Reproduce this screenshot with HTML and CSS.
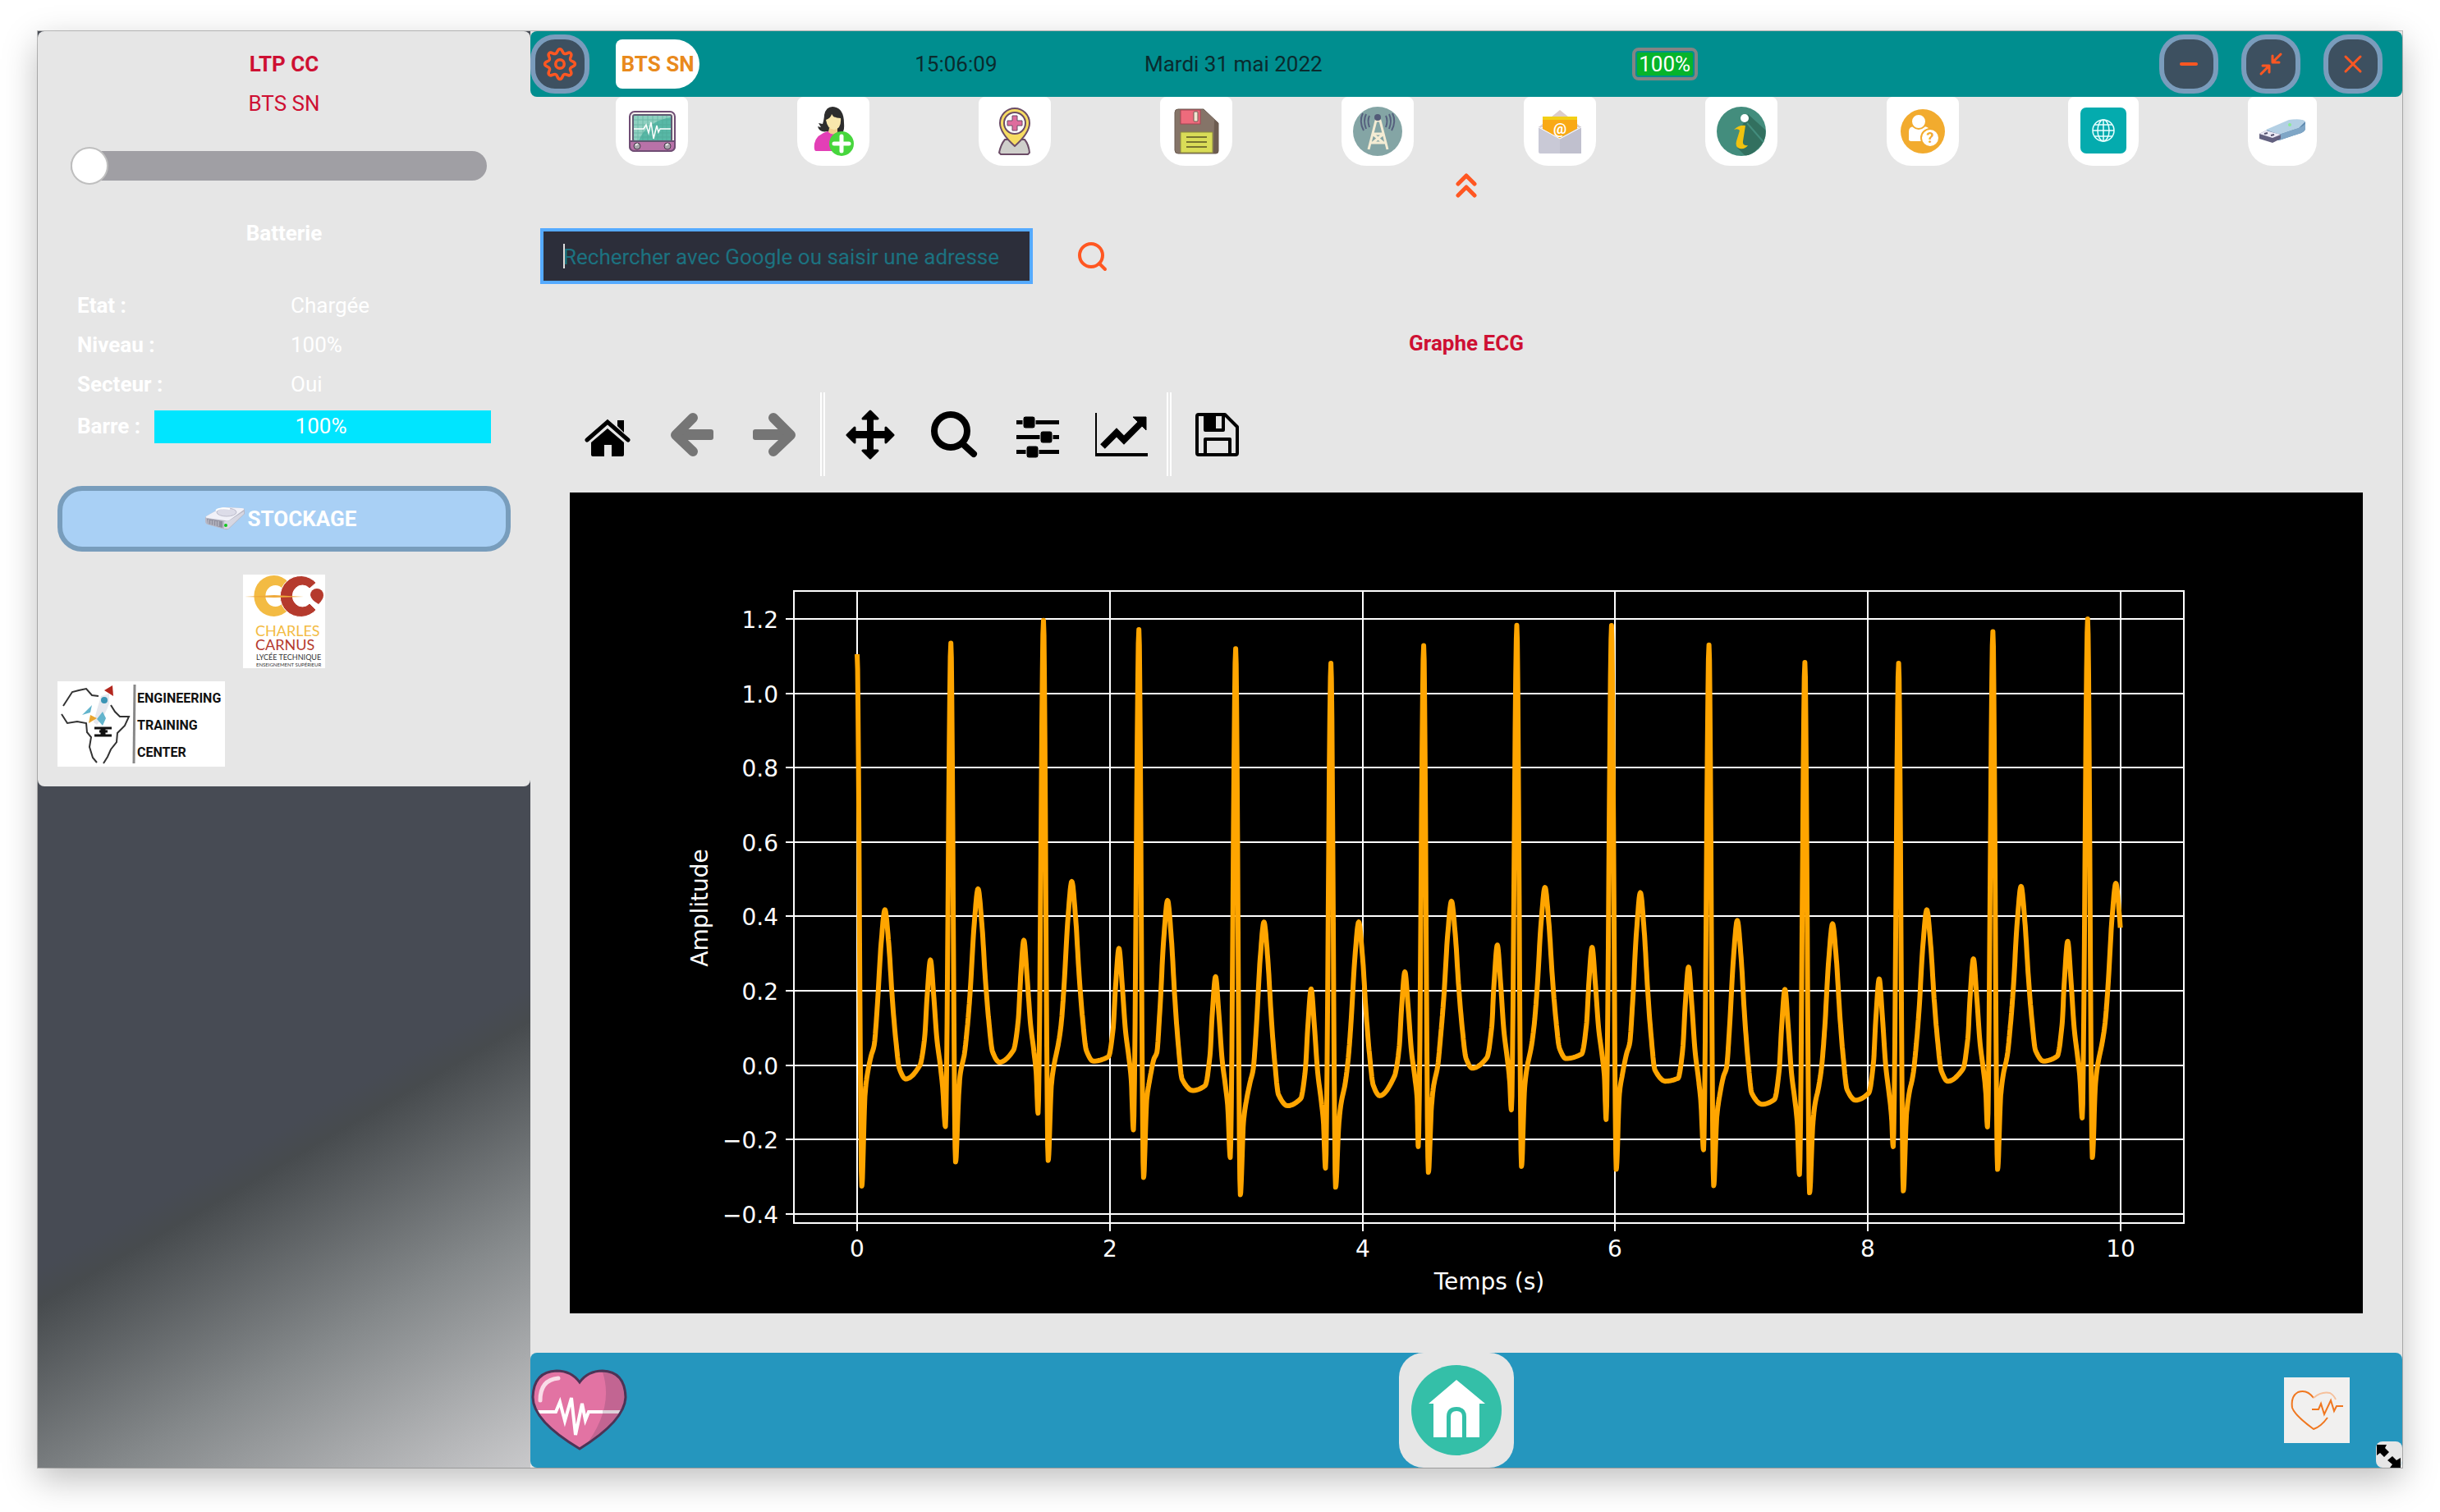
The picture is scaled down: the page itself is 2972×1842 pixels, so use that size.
FILE: index.html
```html
<!DOCTYPE html>
<html lang="fr">
<head>
<meta charset="utf-8">
<meta name="viewport" content="width=device-width, initial-scale=1">
<title>LTP CC - Graphe ECG</title>
<link rel="stylesheet" href="styles.css">
</head>
<body>
<div class="window">
  <div class="side">
    <aside class="panel">
      <h1 class="panel__title">LTP CC</h1>
      <p class="panel__subtitle">BTS SN</p>
      <input class="slider" type="range" min="0" max="100" value="0" aria-label="Réglage">
      <h2 class="panel__heading">Batterie</h2>
      <dl class="stats">
        <dt>Etat :</dt><dd>Chargée</dd>
        <dt>Niveau :</dt><dd>100%</dd>
        <dt>Secteur :</dt><dd>Oui</dd>
      </dl>
      <div class="gauge">
        <span class="gauge__label" id="barre">Barre :</span>
        <div class="gauge__bar" role="progressbar" aria-labelledby="barre" aria-valuenow="100">100%</div>
      </div>
      <button class="storage" type="button">
        <svg width="48" height="30" viewBox="0 0 48 30" aria-hidden="true">
          <path d="M1 12 19 2Q21 1 24 1L44 2Q48 2 48 5V9L29 27Q27 29 24 28L3 22Q0 21 0 18V14Z" fill="#b9b9c6"/>
          <path d="M1 12 19 2Q21 1 24 1L44 2Q48 2 47 4L29 17Q27 18 24 17L3 14Q0 14 1 12Z" fill="#f1f1f8"/>
          <ellipse cx="26" cy="7" rx="12" ry="5" fill="#dcdce8" stroke="#bcbccb"/>
          <path d="M13 5Q18 1 30 3" stroke="#fff" stroke-width="2" fill="none"/>
          <path d="M2 15 21 18V26L3 21Z" fill="#8f8f9d"/>
          <path d="M4 16V21M7 17V22M10 17V23M13 18V24M16 18V24" stroke="#c9c9d3" stroke-width="1"/>
          <path d="M23 18 28 18 47 6V9L28 27 23 27Z" fill="#d7d7e2"/>
          <circle cx="25" cy="23" r="2" fill="#0fc71d"/>
        </svg>
        STOCKAGE
      </button>
      <svg class="logo logo--cc" viewBox="0 0 100 114" role="img" aria-label="Charles Carnus">
        <rect width="100" height="114" fill="#fff"/>
        <path d="M55 9A24 25 0 1 0 55 43L48 35A12 13 0 1 1 48 17Z" fill="#f3bb43"/>
        <path d="M89 10A25 25 0 1 0 89 43L81 35A12 13 0 1 1 81 17Z" fill="#b53a2d" stroke="#fff" stroke-width="1"/>
        <path d="M2 27 38 25 74 27 38 28Z" fill="#efa93a"/>
        <path d="M82 25A8 8 0 1 1 98 25Q98 30 92 36Q83 31 82 25Z" fill="#b53a2d"/>
        <text class="cc-name" x="15" y="75" fill="#f3bb43">CHARLES</text>
        <text class="cc-name" x="15" y="92" fill="#b53a2d">CARNUS</text>
        <text class="cc-small" x="16" y="104">LYCÉE TECHNIQUE</text>
        <text class="cc-tiny" x="16" y="112">ENSEIGNEMENT SUPÉRIEUR</text>
      </svg>
      <svg class="logo logo--etc" viewBox="0 0 204 104" role="img" aria-label="Engineering Training Center">
        <rect width="204" height="104" fill="#fff"/>
        <g fill="none" stroke="#333" stroke-width="2">
          <path d="M7 30 18 13 26 11 35 9 42 17 50 18"/>
          <path d="M5 40 12 51 24 49 35 51 36 62 41 68 39 80 43 93 48 99"/>
          <path d="M65 29 70 37 76 43 87 43 82 54 73 63 72 74 65 83 61 92 56 100"/>
        </g>
        <path d="M57 11 67 5 68 18Z" fill="#b3271e"/>
        <path d="M53 18 63 15 63 27Q58 42 48 53L44 50Q48 34 53 18Z" fill="#e6e8ee"/>
        <circle cx="57" cy="23" r="4" fill="#3b94b5"/>
        <path d="M30 41 42 29 40 38ZM48 46 55 37 59 45 55 54Z" fill="#63b4cc"/>
        <path d="M38 51 40 41 48 45Z" fill="#e9a52f"/>
        <path d="M45 57H54V66H45M66 57H57V66H66M51 61H61" fill="none" stroke="#111" stroke-width="3"/>
        <path d="M94 4 93 100" stroke="#888" stroke-width="3"/>
        <text class="etc-name" x="97" y="26">ENGINEERING</text>
        <text class="etc-name" x="97" y="59">TRAINING</text>
        <text class="etc-name" x="97" y="92">CENTER</text>
      </svg>
    </aside>
  </div>

  <main class="main">
    <header class="topbar">
      <div class="topbar__brand">
        <button class="round" type="button" aria-label="Paramètres">
          <svg width="42" height="42" viewBox="0 0 24 24" fill="none" stroke="#ff5722" stroke-width="2" stroke-linejoin="round" aria-hidden="true">
            <circle cx="12" cy="12" r="3"/>
            <path d="M12 1.5C14 1.5 13.4 4.2 15 4.8 16.600 5.500 18 3 19.500 4.500 21 6 18.500 7.400 19.200 9 19.800 10.600 22.500 10 22.500 12 22.500 14 19.800 13.400 19.200 15 18.500 16.600 21 18 19.500 19.500 18 21 16.600 18.500 15 19.200 13.400 19.800 14 22.500 12 22.500 10 22.500 10.600 19.800 9 19.200 7.400 18.500 6 21 4.500 19.500 3 18 5.500 16.600 4.800 15 4.200 13.400 1.500 14 1.500 12 1.500 10 4.200 10.600 4.800 9 5.500 7.400 3 6 4.500 4.500 6 3 7.400 5.500 9 4.800 10.600 4.200 10 1.500 12 1.500Z"/>
          </svg>
        </button>
        <span class="badge">BTS SN</span>
      </div>
      <time class="topbar__time">15:06:09</time>
      <time class="topbar__date" datetime="2022-05-31">Mardi 31 mai 2022</time>
      <div class="battery"><span class="battery__level">100%</span></div>
      <div class="topbar__controls">
        <button class="round" type="button" aria-label="Réduire">
          <svg width="32" height="32" viewBox="0 0 32 32" stroke="#ff5722" stroke-width="4" stroke-linecap="round" aria-hidden="true"><path d="M7 16H25"/></svg>
        </button>
        <button class="round" type="button" aria-label="Restaurer">
          <svg width="32" height="32" viewBox="0 0 32 32" fill="none" stroke="#ff5722" stroke-width="3" stroke-linecap="round" stroke-linejoin="round" aria-hidden="true"><path d="M28 4 19 13M18 6V14H26M4 28 13 19M14 26V18H6"/></svg>
        </button>
        <button class="round" type="button" aria-label="Fermer">
          <svg width="32" height="32" viewBox="0 0 32 32" stroke="#ff5722" stroke-width="3" stroke-linecap="round" aria-hidden="true"><path d="M7 7 25 25M25 7 7 25"/></svg>
        </button>
      </div>
    </header>

    <nav class="tabs" aria-label="Outils">
      <button class="tab" type="button" aria-label="Moniteur">
        <svg viewBox="0 0 60 60" aria-hidden="true">
          <rect x="3" y="6" width="55" height="48" rx="6" fill="#f3efec" stroke="#6f4d74" stroke-width="2"/>
          <path d="M3 42H58V48Q58 54 52 54H9Q3 54 3 48Z" fill="#b872a8" stroke="#6f4d74" stroke-width="2"/>
          <rect x="7" y="10" width="47" height="32" rx="2" fill="#8fd0c0" stroke="#5f5a72" stroke-width="2"/>
          <path d="M14 41Q24 18 53 13V41Z" fill="#58b8a6"/>
          <path d="M13 11V41M19 11V41M25 11V41M31 11V41M37 11V41M43 11V41M48 11V41M8 16H53M8 22H53M8 32H53M8 37H53" stroke="#4da593" stroke-width="1" opacity=".5"/>
          <path d="M8 27H20L23 22 26 32 29 19 32 39 36 23 38 31 40 27H53" fill="none" stroke="#fff" stroke-width="1.500"/>
          <g fill="#a9a5ac" stroke="#463a4b" stroke-width="1"><circle cx="12" cy="48" r="4"/><circle cx="49" cy="48" r="4"/></g>
          <path d="M10 47 13 45M47 47 50 45" stroke="#eee" stroke-width="2"/>
        </svg>
      </button>
      <button class="tab" type="button" aria-label="Ajouter un patient">
        <svg viewBox="0 0 60 60" aria-hidden="true">
          <path d="M29 0Q43 1 43 20 44 32 39 32L23 30Q13 32 11 24L15 25 12 20 17 21Q19 14 19 10 21 0 29 0Z" fill="#2d2d2d"/>
          <path d="M9 54Q6 54 7 45 9 34 23 30L33 28 41 38V54Z" fill="#e33fb6"/>
          <path d="M25 26H35V31Q30 36 24 31Z" fill="#f0d08c"/>
          <path d="M21 16Q27 14 28 9 30 14 39 14 40 27 31 28 23 28 21 16Z" fill="#f8e7ac"/>
          <circle cx="40" cy="45" r="15" fill="#47d63d"/>
          <path d="M40 36V54M31 45H49" stroke="#fff" stroke-width="5" stroke-linecap="round"/>
        </svg>
      </button>
      <button class="tab" type="button" aria-label="Localisation">
        <svg viewBox="0 0 60 60" aria-hidden="true">
          <path d="M18 40H42Q47 46 48 56L46 58H13L11 56Q13 46 18 40Z" fill="#cfcfcb" stroke="#6b4c66" stroke-width="2"/>
          <path d="M30 2A18 18 0 0 1 48 20Q48 32 30 48 12 32 12 20A18 18 0 0 1 30 2Z" fill="#f6dc62" stroke="#6b4c66" stroke-width="2"/>
          <circle cx="30" cy="20" r="13" fill="#fff" stroke="#6b4c66" stroke-width="2"/>
          <path d="M27 11H33V17H39V23H33V29H27V23H21V17H27Z" fill="#de6c9d" stroke="#6b4c66" stroke-width="1"/>
        </svg>
      </button>
      <button class="tab" type="button" aria-label="Enregistrer">
        <svg viewBox="0 0 60 60" aria-hidden="true">
          <path d="M8 3H39L57 20V54Q57 57 54 57H8Q4 57 4 53V7Q4 3 8 3Z" fill="#857468" stroke="#6b5b50" stroke-width="1"/>
          <path d="M52 16 57 20V54Q57 57 54 57H51Z" fill="#6d5c50"/>
          <rect x="11" y="4" width="24" height="17" fill="#ee6b7c" stroke="#a54552"/>
          <rect x="27" y="6" width="5" height="12" rx="1" fill="#f3e6d2" stroke="#6b5b50"/>
          <path d="M11 31H50V56H11Z" fill="#d9dc57" stroke="#8c8b3c"/>
          <path d="M18 37H43M18 43H43M18 49H43" stroke="#77742f" stroke-width="2"/>
        </svg>
      </button>
      <button class="tab" type="button" aria-label="Antenne">
        <svg viewBox="0 0 60 60" aria-hidden="true">
          <circle cx="30" cy="30" r="30" fill="#84a5a5"/>
          <g fill="none" stroke="#56607e" stroke-width="2"><path d="M20 11Q17 17 20 25M16 9Q12 17 16 27M12 8Q7 18 13 29M40 11Q43 17 40 25M44 9Q48 17 44 27M48 8Q53 18 47 29"/></g>
          <path d="M19 52 28 17H33L42 52M24 33H36M22 44H39M25 34 37 44M36 34 24 44" fill="none" stroke="#f4ecd4" stroke-width="3"/>
          <circle cx="30" cy="13" r="4" fill="#535b78"/>
        </svg>
      </button>
      <button class="tab" type="button" aria-label="Courriel">
        <svg viewBox="0 0 60 60" aria-hidden="true">
          <path d="M4 25 30 4 56 25Z" fill="#dccdca"/>
          <path d="M9 12H51V45H9Z" fill="#f5b914"/>
          <path d="M9 12H51V17H9Z" fill="#f3cf16"/>
          <path d="M4 24 30 38 56 24V55Q56 57 54 57H6Q4 57 4 55Z" fill="#c9c9d6"/>
          <path d="M9 16H51V27L30 39 9 27Z" fill="#f9a916"/>
          <path d="M30 38 56 24V57H30Z" fill="#c0c0ce"/>
          <path d="M4 25 30 39 56 25" fill="none" stroke="#fff" stroke-width="1"/>
          <text class="glyph glyph--at" x="30" y="33">@</text>
        </svg>
      </button>
      <button class="tab" type="button" aria-label="Informations">
        <svg viewBox="0 0 60 60" aria-hidden="true">
          <circle cx="30" cy="30" r="30" fill="#438d7d"/>
          <path d="M38 9 59 28Q61 38 54 47L46 55Q40 60 34 59L25 50 30 25Z" fill="#32705f"/>
          <path d="M37 20 57 43" stroke="#438d7d" stroke-width="2"/>
          <circle cx="34" cy="14" r="5" fill="#fff"/>
          <path d="M21 28Q27 22 35 23L32 42Q31 48 38 47 35 52 28 51 22 49 24 42L28 29Q26 26 21 28Z" fill="#f0c20f"/>
        </svg>
      </button>
      <button class="tab" type="button" aria-label="Aide">
        <svg viewBox="0 0 60 60" aria-hidden="true">
          <circle cx="30" cy="30" r="27" fill="#f2ab2e"/>
          <path d="M13 40V30Q13 24 20 24H31Q38 24 38 30L31 42H17Q13 42 13 40Z" fill="#fff"/>
          <circle cx="25" cy="18" r="9" fill="#fff" stroke="#f2ab2e" stroke-width="2"/>
          <circle cx="39" cy="38" r="11" fill="#fff" stroke="#f2ab2e" stroke-width="2"/>
          <text class="glyph glyph--ask" x="39" y="44">?</text>
        </svg>
      </button>
      <button class="tab tab--web" type="button" aria-label="Navigateur">
        <svg viewBox="0 0 60 60" aria-hidden="true">
          <rect x="2" y="1" width="56" height="56" rx="7" fill="#04abae"/>
          <g fill="none" stroke="#e8ffff" stroke-width="1.500"><circle cx="30" cy="29" r="13"/><ellipse cx="30" cy="29" rx="7" ry="13"/><path d="M30 16V42M17 29H43M19 22H41M19 36H41"/></g>
        </svg>
      </button>
      <button class="tab tab--usb" type="button" aria-label="Clé USB">
        <svg viewBox="0 0 60 60" aria-hidden="true">
          <path d="M10 29 38 17Q56 14 58 19V27Q57 31 50 33L26 41 10 38Z" fill="#5c87ad"/>
          <path d="M10 28 38 16Q54 14 58 18L50 26 26 34Z" fill="#b4d0e4"/>
          <path d="M26 34 50 26Q57 23 58 20V27Q57 31 50 33L26 41Z" fill="#7fa6c6"/>
          <path d="M2 33 10 29 28 34 28 39 18 44 2 39Z" fill="#62607f"/>
          <path d="M2 33 10 29 28 34 18 38Z" fill="#edebf6"/>
          <path d="M8 33 12 32M16 35 20 34" stroke="#54516e" stroke-width="2"/>
          <circle cx="39" cy="22" r="2" fill="#8bec93"/>
        </svg>
      </button>
    </nav>

    <button class="collapse" type="button" aria-label="Replier">
      <svg width="28" height="32" viewBox="0 0 28 32" fill="none" stroke="#ff5722" stroke-width="5" stroke-linecap="round" stroke-linejoin="round" aria-hidden="true"><path d="M4 14 14 4 24 14M4 28 14 18 24 28"/></svg>
    </button>

    <form class="search" role="search">
      <input class="search__field" type="text" placeholder="Rechercher avec Google ou saisir une adresse" aria-label="Rechercher avec Google ou saisir une adresse">
      <button class="search__go" type="button" aria-label="Rechercher">
        <svg width="38" height="38" viewBox="0 0 38 38" fill="none" stroke="#ff5722" stroke-width="4" stroke-linecap="round" aria-hidden="true"><circle cx="18" cy="18" r="14"/><path d="M28 28 35 35"/></svg>
      </button>
    </form>

    <h2 class="graph-title">Graphe ECG</h2>

    <div class="toolbar" role="toolbar" aria-label="Graphe">
      <button class="tool" type="button" aria-label="Accueil">
        <svg viewBox="0 0 72 72" aria-hidden="true"><path d="M48 19H56V34L48 26Z"/><path d="M11 43 36 21 61 43" fill="none" stroke="#000" stroke-width="5" stroke-linecap="round"/><path d="M36 29 56 46V61Q56 63 54 63H41V49H32V63H18Q16 63 16 61V46Z"/></svg>
      </button>
      <button class="tool" type="button" aria-label="Précédent" disabled>
        <svg viewBox="0 0 72 72" fill="#757575" stroke="#757575" aria-hidden="true"><rect x="20" y="30" width="43" height="13" rx="3" stroke="none"/><path d="M38 16 17 37 38 57" fill="none" stroke-width="12" stroke-linecap="round" stroke-linejoin="round"/></svg>
      </button>
      <button class="tool" type="button" aria-label="Suivant" disabled>
        <svg viewBox="0 0 72 72" fill="#757575" stroke="#757575" aria-hidden="true"><rect x="9" y="30" width="43" height="13" rx="3" stroke="none"/><path d="M34 16 55 37 34 57" fill="none" stroke-width="12" stroke-linecap="round" stroke-linejoin="round"/></svg>
      </button>
      <span class="toolbar__rule"></span>
      <button class="tool" type="button" aria-label="Déplacer">
        <svg viewBox="0 0 72 72" aria-hidden="true"><path d="M32 14V58H40V14ZM14 32V41H58V32Z"/><path d="M36 8 45 17H27ZM36 65 27 56H45ZM8 37 17 28V46ZM64 37 55 28V46Z" stroke="#000" stroke-width="3" stroke-linejoin="round"/></svg>
      </button>
      <button class="tool" type="button" aria-label="Zoom">
        <svg viewBox="0 0 72 72" fill="none" stroke="#000" stroke-width="8" stroke-linecap="round" aria-hidden="true"><circle cx="32" cy="32" r="20"/><path d="M48 49 60 60"/></svg>
      </button>
      <button class="tool" type="button" aria-label="Réglages">
        <svg viewBox="0 0 72 72" aria-hidden="true"><path d="M10 19H62V24H10ZM10 37H62V42H10ZM10 55H62V60H10Z"/><g stroke="#e6e6e6"><rect x="18" y="14" width="15" height="15" rx="3"/><rect x="39" y="32" width="15" height="15" rx="3"/><rect x="22" y="50" width="15" height="15" rx="3"/></g></svg>
      </button>
      <button class="tool" type="button" aria-label="Axes">
        <svg viewBox="0 0 72 72" aria-hidden="true"><path d="M4 10H6V59H68V63H4Z"/><path d="M13 51 30 34 39 43 62 20" fill="none" stroke="#000" stroke-width="8"/><path d="M50 15H66V31Z" stroke="#000"/></svg>
      </button>
      <span class="toolbar__rule"></span>
      <button class="tool" type="button" aria-label="Sauvegarder le graphe">
        <svg viewBox="0 0 72 72" fill="none" stroke="#000" stroke-width="4" stroke-linejoin="round" aria-hidden="true"><path d="M14 12H46L61 27V59Q61 61 59 61H14Q12 61 12 59V14Q12 12 14 12ZM22 61V42H52V61M22 13V31H44V13"/><path d="M24 13H33V30H24Z" fill="#000"/></svg>
      </button>
    </div>

    <svg class="plot" id="plot" viewBox="0 0 2184 1000" role="img" aria-label="Amplitude en fonction du temps">
      <g id="plot-grid"></g>
      <path id="plot-line" class="plot__line"/>
      <text class="plot__text" x="1120" y="971" text-anchor="middle">Temps (s)</text>
      <text class="plot__text" transform="translate(168 506) rotate(-90)" text-anchor="middle">Amplitude</text>
    </svg>

    <footer class="dock">
      <svg class="dock__heart" viewBox="0 0 120 104" aria-hidden="true">
        <defs><clipPath id="heart-clip"><path d="M60 99Q3 65 3 36 4 5 32 4 50 4 60 18 70 4 88 4 115 5 116 36 115 65 60 99Z"/></clipPath></defs>
        <g clip-path="url(#heart-clip)">
          <path d="M0 0H120V104H0Z" fill="#e273a3"/>
          <path d="M86 0Q106 50 60 104H120V0Z" fill="#c26592"/>
          <path d="M0 54H31L36 42 42 65 50 37 55 82 63 44 67 64 71 54H120" fill="none" stroke="#fff" stroke-width="4"/>
          <path d="M88 54H120" stroke="#ddd0d8" stroke-width="4"/>
        </g>
        <path d="M12 40Q12 15 34 13" fill="none" stroke="#f9dce8" stroke-width="5" stroke-linecap="round"/>
        <path d="M60 99Q3 65 3 36 4 5 32 4 50 4 60 18 70 4 88 4 115 5 116 36 115 65 60 99Z" fill="none" stroke="#4d3356" stroke-width="3"/>
      </svg>
      <button class="dock__home" type="button" aria-label="Accueil">
        <svg width="110" height="110" viewBox="0 0 110 110" aria-hidden="true">
          <circle cx="55" cy="55" r="55" fill="#34bfa8"/>
          <path d="M55 18 90 47H83V88H67V63Q67 51 55 51 43 51 43 63V88H27V47H21Z" fill="#fff"/>
          <path d="M48 88V63Q48 56 55 56 62 56 62 63V88Z" fill="#fff"/>
        </svg>
      </button>
      <svg class="dock__pulse" viewBox="0 0 80 80" aria-hidden="true">
        <rect width="80" height="80" fill="#f1f0ef"/>
        <g fill="none" stroke="#f0771f" stroke-width="2">
          <path d="M36 25Q28 14 17 18 8 23 10 37 13 46 36 63 45 60 53 49"/>
          <path d="M36 25Q45 17 56 19 61 22 63 27" stroke="#f6c09b"/>
          <path d="M34 39H42L45 32 49 45 57 28 61 41 64 35H72"/>
        </g>
      </svg>
      <button class="grip" type="button" aria-label="Redimensionner">
        <svg width="32" height="32" viewBox="0 0 32 32" aria-hidden="true"><path d="M1 4H13L11 8 16 13 10 19 5 14 1 17ZM20 18 25 23 30 20V32H17L20 28 14 23Z"/></svg>
      </button>
    </footer>
  </main>
</div>
<script src="script.js"></script>
</body>
</html>
```

FILE: styles.css
```css
* { box-sizing: border-box; }

body {
  margin: 0;
  padding: 38px 46px 54px;
  background: #fff;
  color: #0a2b2e;
  font-family: Roboto, "Liberation Sans", sans-serif;
  font-size: 26px;
  line-height: 48px;
}

h1, h2, p, dl, dd { margin: 0; font-size: inherit; }
button { padding: 0; border: 0; background: none; font: inherit; cursor: pointer; }
svg { display: block; }

.window {
  display: flex;
  min-height: calc(100vh - 92px);
  box-shadow: 0 0 0 1px rgba(0, 0, 0, .25), 0 14px 40px rgba(0, 0, 0, .26);
}

/* Left column */
.side {
  flex: 0 0 600px;
  background: linear-gradient(150deg, #474b54 72%, #474b4e 74%, #85898b 86%, #c9c9cb);
}
.panel {
  display: flex;
  flex-direction: column;
  padding: 16px 24px 24px;
  border-radius: 8px;
  background: #e6e6e6;
  color: #fff;
}
.panel__title, .panel__subtitle { color: #ce1033; text-align: center; }
.panel__heading { margin-top: 34px; text-align: center; }

.slider {
  -webkit-appearance: none;
  appearance: none;
  height: 48px;
  margin: 28px 29px 0 16px;
  background: none;
}
.slider::-webkit-slider-runnable-track { height: 36px; border-radius: 18px; background: #a09fa4; }
.slider::-webkit-slider-thumb {
  -webkit-appearance: none;
  width: 46px;
  height: 46px;
  margin-top: -5px;
  border: 2px solid #bfbfbf;
  border-radius: 50%;
  background: #fff;
}

.stats {
  display: grid;
  grid-template-columns: 260px 1fr;
  margin: 40px 24px 0;
}
.stats dt, .gauge__label { font-weight: bold; }
.gauge { display: flex; justify-content: space-between; margin: 8px 24px 0; line-height: 38px; }
.gauge__bar { width: 410px; height: 40px; padding-right: 4px; background: #00e5ff; text-align: center; }

.storage {
  display: flex;
  align-items: center;
  justify-content: center;
  gap: 4px;
  height: 80px;
  margin-top: 52px;
  padding-right: 8px;
  border: 6px solid #789dbc;
  border-radius: 30px;
  background: #a9d0f5;
  color: #fff;
  font-weight: bold;
}

.logo--cc { width: 100px; margin: 28px auto 16px; }
.logo--etc { width: 204px; }
.cc-name { font: 18px Lato, sans-serif; }
.cc-small { font: 9px Lato, sans-serif; fill: #333; }
.cc-tiny { font: 6px Lato, sans-serif; fill: #333; }
.etc-name { font: bold 16px Roboto, sans-serif; fill: #111; }

/* Right column */
.main {
  display: flex;
  flex: 1;
  flex-direction: column;
  min-width: 0;
  background: #e6e6e6;
}

.topbar {
  display: grid;
  grid-template-columns: auto 263fr auto 180fr auto 378fr auto 564fr auto;
  align-items: center;
  height: 80px;
  padding-right: 24px;
  border-radius: 8px;
  background: #008e8f;
}
.topbar__brand { display: flex; align-items: center; gap: 32px; grid-column: 1; }
.topbar__time { grid-column: 3; }
.topbar__date { grid-column: 5; }
.battery {
  grid-column: 7;
  height: 40px;
  padding: 2px;
  border: 4px solid #848484;
  border-radius: 8px;
}
.battery__level {
  display: block;
  width: 68px;
  border-radius: 2px;
  background: #06b42b;
  color: #fff;
  line-height: 28px;
  text-align: center;
}
.topbar__controls { display: flex; gap: 28px; grid-column: 9; }

.round {
  display: grid;
  place-items: center;
  width: 72px;
  height: 72px;
  border: 6px solid #7a9cbc;
  border-radius: 30px;
  background: #3d5060;
}
.badge {
  width: 102px;
  padding: 6px 0;
  border-radius: 8px 30px 30px 8px;
  background: #fff;
  color: #e98a1d;
  font-weight: bold;
  text-align: center;
}

.tabs { display: flex; justify-content: space-between; padding: 0 104px; }
.tab {
  display: grid;
  place-items: center;
  width: 88px;
  height: 84px;
  border-radius: 8px 8px 30px 30px;
  background: #fff;
}
.tab--web { width: 86px; }
.tab--usb { width: 84px; }
.tab svg { width: 60px; height: 60px; }
.glyph { text-anchor: middle; font-family: Roboto, sans-serif; font-weight: bold; }
.glyph--at { font-size: 18px; fill: #fff; }
.glyph--ask { font-size: 18px; fill: #f2ab2e; }

.collapse { display: grid; place-items: center; align-self: center; width: 48px; height: 48px; }

.search { display: flex; align-items: center; gap: 36px; margin: 28px 12px 0; }
.search__field {
  width: 600px;
  height: 68px;
  padding: 2px 24px 0;
  border: 4px solid #55aaff;
  border-radius: 0;
  outline: 0;
  background: linear-gradient(#ddd, #ddd) 24px center / 2px 30px no-repeat #2c2e3a;
  color: #fff;
  font: inherit;
}
.search__field::placeholder { color: #1c7280; opacity: 1; }
.search__go { display: grid; place-items: center; width: 72px; height: 68px; }

.graph-title { margin-top: 48px; color: #ce1033; text-align: center; }

.toolbar { display: flex; margin: 36px 43px 0; }
.tool { display: grid; place-items: center; width: 102px; height: 102px; }
.tool svg { width: 72px; height: 72px; }
.toolbar__rule {
  width: 6px;
  margin: 0 4px;
  border: solid #fff;
  border-width: 0 2px;
}

.plot { margin: 20px 48px 48px; background: #000; }
.plot__axis { fill: none; stroke: #fff; stroke-width: 2; }
.plot__text { fill: #fff; font: 28px "DejaVu Sans", sans-serif; }
.plot__line { fill: none; stroke: #ffa500; stroke-width: 6; stroke-linejoin: round; }

.dock {
  position: relative;
  display: flex;
  align-items: center;
  justify-content: space-between;
  height: 140px;
  margin-top: auto;
  padding-right: 64px;
  border-radius: 8px;
  background: #2596be;
}
.dock__heart { width: 120px; }
.dock__home {
  display: grid;
  place-items: center;
  width: 140px;
  height: 140px;
  border-radius: 30px;
  background: #e6e6e6;
}
.dock__pulse { width: 80px; }
.grip {
  position: absolute;
  right: 0;
  bottom: 0;
  border-radius: 8px;
  background: #e6e6e6;
}
```

FILE: script.js
```js
// Each beat: R time, R, Q, S, T amplitudes, preceding P amplitude,
// P / T / trough times and trough amplitude, then the level before the next P wave.
const beats = [
  { r: 0, R: 1.105, S: -0.325, t: 0.22, T: 0.418, b: 0.385, B: -0.037, next: 0 },
  { p: 0.580, P: 0.283, Q: -0.165, r: 0.742, R: 1.135, S: -0.26, t: 0.957, T: 0.474, b: 1.127, B: 0.008, next: 0.04 },
  { p: 1.320, P: 0.336, Q: -0.129, r: 1.475, R: 1.196, S: -0.256, t: 1.699, T: 0.494, b: 1.869, B: 0.011, next: 0.023 },
  { p: 2.072, P: 0.314, Q: -0.174, r: 2.230, R: 1.171, S: -0.302, t: 2.457, T: 0.443, b: 2.656, B: -0.068, next: -0.055 },
  { p: 2.837, P: 0.238, Q: -0.248, r: 2.996, R: 1.12, S: -0.348, t: 3.220, T: 0.385, b: 3.407, B: -0.109, next: -0.09 },
  { p: 3.593, P: 0.205, Q: -0.277, r: 3.750, R: 1.081, S: -0.328, t: 3.970, T: 0.385, b: 4.136, B: -0.082, next: -0.03 },
  { p: 4.335, P: 0.251, Q: -0.219, r: 4.484, R: 1.128, S: -0.288, t: 4.704, T: 0.441, b: 4.869, B: -0.008, next: 0.02 },
  { p: 5.067, P: 0.323, Q: -0.12, r: 5.221, R: 1.183, S: -0.272, t: 5.444, T: 0.478, b: 5.610, B: 0.018, next: 0.03 },
  { p: 5.817, P: 0.317, Q: -0.146, r: 5.971, R: 1.182, S: -0.28, t: 6.199, T: 0.464, b: 6.398, B: -0.043, next: -0.035 },
  { p: 6.580, P: 0.264, Q: -0.227, r: 6.742, R: 1.13, S: -0.324, t: 6.966, T: 0.389, b: 7.161, B: -0.105, next: -0.092 },
  { p: 7.343, P: 0.204, Q: -0.294, r: 7.501, R: 1.083, S: -0.343, t: 7.720, T: 0.38, b: 7.902, B: -0.094, next: -0.075 },
  { p: 8.089, P: 0.232, Q: -0.219, r: 8.243, R: 1.081, S: -0.338, t: 8.466, T: 0.418, b: 8.632, B: -0.043, next: -0.01 },
  { p: 8.835, P: 0.286, Q: -0.166, r: 8.989, R: 1.166, S: -0.28, t: 9.212, T: 0.481, b: 9.390, B: 0.011, next: 0.024 },
  { p: 9.581, P: 0.333, Q: -0.142, r: 9.739, R: 1.2, S: -0.248, t: 9.962, T: 0.489, b: 10.13, B: 0.02, next: 0.02 }
];

const points = [];
let level = 0;
let trough = 0;
for (const k of beats) {
  if (k.p !== undefined) {
    const h = k.P - level;
    points.push(
      [k.p - 0.083, level], [k.p - 0.045, level + 0.27 * h], [k.p - 0.026, level + 0.66 * h],
      [k.p, k.P], [k.p + 0.026, level + 0.66 * h], [k.p + 0.052, level + 0.24 * h],
      [k.p + 0.078, level], [k.p + 0.097, level - 0.06], [k.r - 0.043, k.Q]
    );
  }
  const pre = (trough + k.B) / 2 + 0.01;
  const h = k.T - k.B;
  points.push(
    [k.r, k.R], [k.r + 0.037, k.S], [k.r + 0.062, pre - 0.075],
    [k.t - 0.141, pre - 0.02], [k.t - 0.108, pre + 0.035], [k.t - 0.085, k.B + 0.2 * h],
    [k.t - 0.062, k.B + 0.41 * h],
    [k.t - 0.03, k.B + 0.8 * h], [k.t, k.T], [k.t + 0.03, k.B + 0.8 * h],
    [k.t + 0.058, k.B + 0.48 * h], [k.t + 0.085, k.B + 0.24 * h],
    [k.t + 0.115, k.B + 0.06 * h], [k.b, k.B]
  );
  level = k.next;
  trough = k.B;
}

// Monotone cubic tangents keep every listed extremum in place.
const slope = i => (points[i + 1][1] - points[i][1]) / (points[i + 1][0] - points[i][0]);
const tangent = points.map((_, i) => {
  if (i === 0 || i === points.length - 1) return 0;
  const a = slope(i - 1);
  const b = slope(i);
  return a * b <= 0 ? 0 : 2 * a * b / (a + b);
});

const X = t => 350 + t * 153.9;
const Y = v => 697.7 - v * 453.1;
const line = [];
for (let i = 0; i < points.length - 1; i++) {
  const [t0, v0] = points[i];
  const [t1, v1] = points[i + 1];
  const d = t1 - t0;
  for (let s = 0; s < 10; s++) {
    const u = s / 10;
    if (t0 + u * d > 10) break;
    const v = (2 * u ** 3 - 3 * u ** 2 + 1) * v0 + (u ** 3 - 2 * u ** 2 + u) * d * tangent[i]
      + (3 * u ** 2 - 2 * u ** 3) * v1 + (u ** 3 - u ** 2) * d * tangent[i + 1];
    line.push(X(t0 + u * d).toFixed(1) + ' ' + Y(v).toFixed(1));
  }
}
document.getElementById('plot-line').setAttribute('d', 'M' + line.join('L'));

let grid = '<rect class="plot__axis" x="273" y="120" width="1693" height="770"/>';
for (let t = 0; t <= 10; t += 2) {
  const x = Math.round(X(t));
  grid += `<path class="plot__axis" d="M${x} 120V900"/><text class="plot__text" x="${x}" y="931" text-anchor="middle">${t}</text>`;
}
for (let n = -2; n <= 6; n++) {
  const y = Math.round(Y(n / 5));
  const label = (n / 5).toFixed(1).replace('-', '\u2212');
  grid += `<path class="plot__axis" d="M263 ${y}H1966"/><text class="plot__text" x="254" y="${y + 11}" text-anchor="end">${label}</text>`;
}
document.getElementById('plot-grid').innerHTML = grid;
```
